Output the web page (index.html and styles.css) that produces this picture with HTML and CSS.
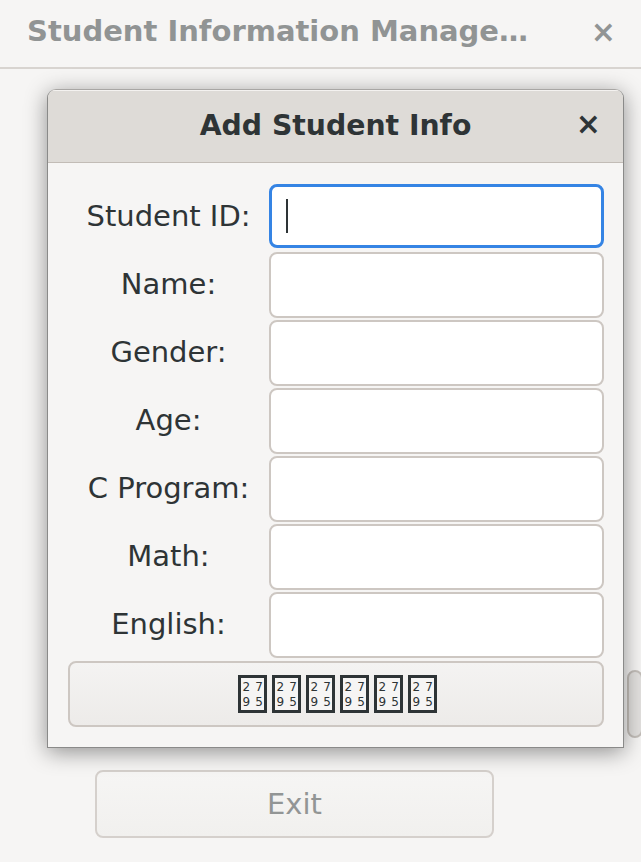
FILE: index.html
```html
<!DOCTYPE html>
<html>
<head>
<meta charset="utf-8">
<link rel="stylesheet" href="styles.css">
</head>
<body>
<div class="window">
  <header class="main-header">
    <span class="main-title">Student Information Manage…</span>
    <span class="main-close">×</span>
  </header>
  <main class="main-body">
    <div class="bg-row"><button class="bg-btn partial"></button></div>
    <div class="exit-row"><button class="bg-btn exit">Exit</button></div>
  </main>

  <section class="dialog">
    <header class="dlg-header">
      <span class="dlg-title">Add Student Info</span>
      <span class="dlg-close">×</span>
    </header>
    <div class="dlg-body">
      <label class="lbl">Student ID:</label>
      <div class="entry focus"><span class="caret"></span></div>
      <label class="lbl">Name:</label>
      <div class="entry"></div>
      <label class="lbl">Gender:</label>
      <div class="entry"></div>
      <label class="lbl">Age:</label>
      <div class="entry"></div>
      <label class="lbl">C Program:</label>
      <div class="entry"></div>
      <label class="lbl">Math:</label>
      <div class="entry"></div>
      <label class="lbl">English:</label>
      <div class="entry"></div>
      <button class="submit">
        <span class="tofu">27<br>95</span><span class="tofu">27<br>95</span><span class="tofu">27<br>95</span><span class="tofu">27<br>95</span><span class="tofu">27<br>95</span><span class="tofu">27<br>95</span>
      </button>
    </div>
  </section>
</div>
</body>
</html>
```
FILE: styles.css
```css
html, body {
  margin: 0;
  padding: 0;
}
body {
  width: 641px;
  height: 862px;
  overflow: hidden;
  background: #f6f5f4;
  font-family: "DejaVu Sans", sans-serif;
  color: #2e3436;
}
.window {
  position: relative;
  width: 641px;
  height: 862px;
}
.main-header {
  display: flex;
  align-items: center;
  justify-content: space-between;
  padding: 0 25px 5px 27px;
  box-sizing: border-box;
  height: 69px;
  border-bottom: 2px solid #d8d4d0;
}
.main-title {
  font-weight: bold;
  font-size: 29px;
  color: #919494;
  white-space: nowrap;
}
.main-close {
  font-weight: bold;
  font-size: 30px;
  color: #919494;
}
.main-body {
  display: flex;
  flex-direction: column;
}
.bg-row {
  margin-top: 601px;
  height: 68px;
  display: flex;
}
.bg-btn {
  font-family: "DejaVu Sans", sans-serif;
  border: 2px solid #d5d0cc;
  border-radius: 8px;
  background: linear-gradient(#f6f5f4, #f1f0ee);
  box-sizing: border-box;
}
.partial {
  margin-left: 627px;
  width: 100px;
  height: 68px;
  border-color: #c4bfba;
  background: #e3e1df;
}
.exit-row {
  margin-top: 32px;
  display: flex;
}
.exit {
  margin-left: 95px;
  width: 399px;
  height: 68px;
  font-size: 29px;
  color: #929595;
}
.dialog {
  position: absolute;
  left: 47px;
  top: 89px;
  width: 577px;
  height: 659px;
  box-sizing: border-box;
  border: 1px solid #8a8a89;
  border-top-color: #a8a6a4;
  border-radius: 9px 9px 0 0;
  background: #f6f5f4;
  box-shadow: 0 4px 22px rgba(0, 0, 0, 0.42);
  overflow: hidden;
}
.dlg-header {
  height: 73px;
  box-sizing: border-box;
  background: #dedbd7;
  border-bottom: 1px solid #c2bcb6;
  display: flex;
  align-items: center;
  justify-content: center;
  position: relative;
  box-shadow: inset 0 1px 0 #f4f2f0;
  padding-bottom: 1px;
}
.dlg-title {
  font-weight: bold;
  font-size: 28.3px;
  color: #2e3436;
}
.dlg-close {
  position: absolute;
  right: 22px;
  top: 16px;
  font-weight: bold;
  font-size: 30px;
  color: #2e3436;
}
.dlg-body {
  display: grid;
  grid-template-columns: 201px 335px;
  grid-auto-rows: 66px;
  row-gap: 2px;
  padding: 21px 20px 0 20px;
}
.lbl {
  display: flex;
  align-items: center;
  justify-content: center;
  font-size: 29px;
  color: #2e3436;
  white-space: nowrap;
  padding-bottom: 2px;
}
.entry {
  background: #ffffff;
  border: 2px solid #cdc7c2;
  border-radius: 8px;
  box-sizing: border-box;
  display: flex;
  align-items: center;
}
.entry.focus {
  border: 3px solid #3584e4;
  height: 64px;
}
.caret {
  width: 2px;
  height: 34px;
  background: #2e3436;
  margin-left: 14px;
}
.submit {
  grid-column: 1 / 3;
  margin-top: 1px;
  height: 66px;
  border: 2px solid #cdc7c2;
  border-radius: 8px;
  background: linear-gradient(#f4f3f2, #edebe9);
  display: flex;
  align-items: center;
  justify-content: center;
  gap: 5px;
  padding: 0 0 0 2px;
  font-family: "DejaVu Sans", sans-serif;
}
.tofu {
  flex: none;
  display: inline-block;
  width: 29px;
  height: 38px;
  box-sizing: border-box;
  border: 3px solid #2e3436;
  font-size: 12px;
  line-height: 15px;
  letter-spacing: 5px;
  padding: 2px 0 0 2px;
  color: #2e3436;
  text-align: left;
  background: #f6f5f4;
  white-space: nowrap;
  overflow: hidden;
}
```
